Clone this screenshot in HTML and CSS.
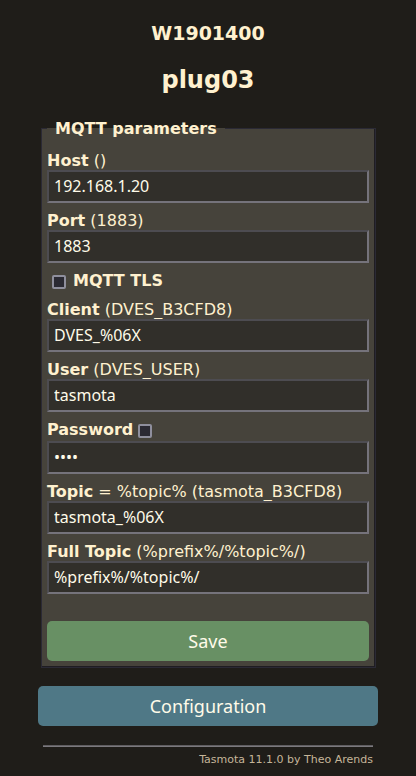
FILE: index.html
```html
<!DOCTYPE html>
<html lang="en">
<head>
<meta charset="utf-8">
<meta name="viewport" content="width=device-width, initial-scale=1">
<title>plug03 - Configure MQTT</title>
<link rel="stylesheet" href="styles.css">
</head>
<body>
<main class="page">
  <header class="header">
    <h3 class="module">W1901400</h3>
    <h2 class="device">plug03</h2>
  </header>
  <form>
    <fieldset class="panel">
      <legend class="legend">MQTT parameters</legend>
      <div class="field">
        <label for="host"><b>Host</b> ()</label>
        <input class="text" id="host" type="text" value="192.168.1.20">
      </div>
      <div class="field">
        <label for="port"><b>Port</b> (1883)</label>
        <input class="text" id="port" type="text" value="1883">
      </div>
      <div class="check-row">
        <input class="check" id="tls" type="checkbox">
        <label for="tls"><b>MQTT TLS</b></label>
      </div>
      <div class="field">
        <label for="client"><b>Client</b> (DVES_B3CFD8)</label>
        <input class="text" id="client" type="text" value="DVES_%06X">
      </div>
      <div class="field">
        <label for="user"><b>User</b> (DVES_USER)</label>
        <input class="text" id="user" type="text" value="tasmota">
      </div>
      <div class="field">
        <div class="password-label">
          <label for="password"><b>Password</b></label>
          <input class="check" type="checkbox" aria-label="Show password">
        </div>
        <input class="text" id="password" type="password" value="****">
      </div>
      <div class="field">
        <label for="topic"><b>Topic</b> = %topic% (tasmota_B3CFD8)</label>
        <input class="text" id="topic" type="text" value="tasmota_%06X">
      </div>
      <div class="field">
        <label for="fulltopic"><b>Full Topic</b> (%prefix%/%topic%/)</label>
        <input class="text" id="fulltopic" type="text" value="%prefix%/%topic%/">
      </div>
      <button class="button save" type="submit">Save</button>
    </fieldset>
  </form>
  <button class="button config" type="button">Configuration</button>
  <footer class="footer"><a href="#">Tasmota 11.1.0 by Theo Arends</a></footer>
</main>
</body>
</html>
```
FILE: styles.css
```css
* {
  box-sizing: border-box;
}

body {
  margin: 0;
  background: #1f1d19;
  color: #fff1cf;
  font: 16px/19px "DejaVu Sans", Verdana, sans-serif;
}

.page {
  max-width: 356px;
  margin: 0 auto;
  padding: 22px 8px 10px;
}

.header {
  text-align: center;
}

.module {
  margin: 0 0 21px;
  font-size: 19px;
  line-height: 22px;
}

.device {
  margin: 0 0 24px;
  font-size: 24px;
  line-height: 30px;
}

.panel {
  min-width: 0;
  margin: 0 2px 0 3px;
  padding: 5px 6px 6px 5px;
  border: 1px solid #2b2a35;
  background: #46433b;
  box-shadow: inset -1px -1px #1f1d22;
}

.legend {
  padding: 0 8px;
  font-weight: bold;
}

.field {
  display: flex;
  flex-direction: column;
  margin-top: 8px;
}

.text {
  width: 100%;
  height: 33px;
  margin: 0;
  padding: 4px 5px 6px;
  border: 2px solid;
  border-color: #4d4c51 #75737b #75737b #4d4c51;
  border-radius: 0;
  background: #312f2a;
  color: #fffbe9;
  font: 16px/19px "Noto Sans", sans-serif;
}

.check {
  appearance: none;
  flex: none;
  width: 14px;
  height: 14px;
  margin: 0;
  border: 2px solid #8f8f9d;
  border-radius: 2px;
  background: #2b2a33;
}

.check:checked {
  background: #8f8f9d;
}

.check-row {
  display: flex;
  align-items: flex-end;
  gap: 7px;
  margin-top: 8px;
  padding-left: 5px;
}

.check-row + .field {
  margin-top: 10px;
}

.check-row .check {
  margin-bottom: 1px;
}

.password-label {
  display: flex;
  align-items: flex-start;
  gap: 5px;
  height: 21px;
}

.password-label .check {
  margin-top: 4px;
}

.button {
  display: block;
  width: 100%;
  height: 40px;
  padding: 0;
  border: 0;
  border-radius: 5px;
  color: #fffbe9;
  font: 18px/40px "Noto Sans", sans-serif;
  cursor: pointer;
}

.save {
  margin-top: 27px;
  background: #689064;
}

.config {
  margin-top: 18px;
  background: #4f7886;
}

.footer {
  margin: 19px 5px 0;
  padding-top: 6px;
  border-top: 1px solid #5f5d60;
  box-shadow: inset 0 1px #7b797e;
  font-size: 11px;
  line-height: 16px;
  text-align: right;
}

.footer a {
  color: #c5b599;
  text-decoration: none;
}
```
